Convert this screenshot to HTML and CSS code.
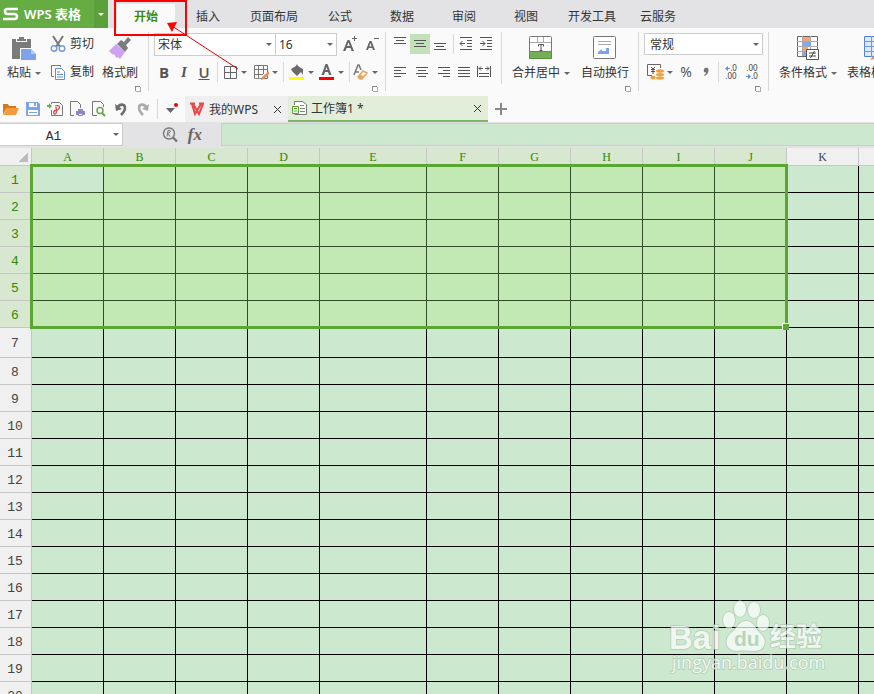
FILE: index.html
```html
<!DOCTYPE html>
<html lang="zh-CN">
<head>
<meta charset="utf-8">
<title>工作簿1 - WPS 表格</title>
<link rel="stylesheet" href="styles.css">
</head>
<body>
<div class="app">
  <header class="menubar">
    <button class="brand"><svg width="16" height="14" viewBox="0 0 16 14"><path d="M15 2H4.500Q2 2 2 4.500T4.500 7H11.500Q14 7 14 9.500T11.500 12H0" fill="none" stroke="#fff" stroke-width="2.600"/></svg><span>WPS 表格</span></button>
    <button class="brand-more" aria-label="菜单"><span class="caret"></span></button>
    <nav class="menus">
      <a class="menu active" href="#">开始</a>
      <a class="menu" href="#">插入</a>
      <a class="menu" href="#">页面布局</a>
      <a class="menu" href="#">公式</a>
      <a class="menu" href="#">数据</a>
      <a class="menu" href="#">审阅</a>
      <a class="menu" href="#">视图</a>
      <a class="menu" href="#">开发工具</a>
      <a class="menu" href="#">云服务</a>
    </nav>
  </header>

  <section class="ribbon">
    <div class="group clipboard">
      <button class="big"><svg width="24" height="24" viewBox="0 0 24 24"><path d="M0 3h4v3h11V3h4v9H8v11H0zM5 3h2V1h5v2h2v2H5z" fill="#7b7b7b"/><path d="M9 13h10l5 5v6H9z" fill="#7da3ea"/><path d="M19 13v5h5" fill="#b5cbf5"/></svg><span class="label">粘贴<i class="caret"></i></span></button>
      <button class="tool cut"><svg width="16" height="18" viewBox="0 0 16 18"><path d="M3 1l7 11M13 1L6 12" stroke="#777" stroke-width="2"/><circle cx="4" cy="13.500" r="2.800" fill="none" stroke="#7499dc" stroke-width="1.400"/><circle cx="12" cy="13.500" r="2.800" fill="none" stroke="#7499dc" stroke-width="1.400"/></svg>剪切</button>
      <button class="tool copy"><svg width="16" height="17" viewBox="0 0 16 17"><path d="M4 12.500H1.500V1.500h9V3" fill="none" stroke="#777"/><path d="M5.500 4.500h6l3 3v8h-9z" fill="#fff" stroke="#5f8ce0"/><path d="M7 8h3M7 10.500h6M7 13h6" stroke="#5f8ce0"/></svg>复制</button>
      <button class="big painter"><svg width="24" height="24" viewBox="0 0 24 24"><path d="M13 4l3 2 4-5 3 3-5 5 2 3-3 4-8-8z" fill="#7c7c7c"/><path d="M8 8l9 8-5 7-2-2-2 1-1-3-3-1-3-3z" fill="#cda3f1"/></svg><span class="label">格式刷</span></button>
      <button class="launcher" aria-label="剪贴板设置"></button>
    </div>

    <div class="group font">
      <div class="fields">
        <label class="combo"><select aria-label="字体"><option>宋体</option></select><i class="caret"></i></label>
        <label class="combo size"><select aria-label="字号"><option>16</option></select><i class="caret"></i></label>
        <button aria-label="增大字号"><svg width="16" height="18" viewBox="0 0 16 18"><path d="M1 16L5.500 5h2L12 16H9.500l-1-3h-4l-1 3zM5.200 11h2.600L6.500 7.300z" fill="#666" fill-rule="evenodd"/><path d="M10 3.500h5M12.500 1v5" stroke="#666"/></svg></button>
        <button aria-label="减小字号"><svg width="16" height="18" viewBox="0 0 16 18"><path d="M2 15L5.500 6h2L11 15H9l-.800-2h-3.500l-.700 2zM5.300 11.500h2.300L6.500 8z" fill="#666" fill-rule="evenodd"/><path d="M10 3.500h5" stroke="#666"/></svg></button>
      </div>
      <div class="tools">
        <button class="glyph bold">B</button>
        <button class="glyph italic">I</button>
        <button class="glyph under">U</button>
        <i class="sep"></i>
        <button class="drop"><svg width="15" height="15" viewBox="0 0 15 15"><path d="M1.500 1.500h12v12h-12zM7.500 1v13M1 7.500h13" fill="none" stroke="#666"/></svg><i class="caret"></i></button>
        <button class="drop"><svg width="16" height="15" viewBox="0 0 16 15"><path d="M1.500 .500h13v13h-13zM5.500 1v13M10.500 1v8M1 4.500h13M1 9.500h9" fill="none" stroke="#777"/><path d="M16 6l-7 6-1 3 3-1 5-5z" fill="#ef8b56"/><path d="M2 13.500h6" stroke="#ef8b56" stroke-dasharray="1 1"/></svg><i class="caret"></i></button>
        <i class="sep"></i>
        <button class="drop"><svg width="16" height="16" viewBox="0 0 16 16"><path d="M2 5l5-3 1-2 1 2 3 2 2 1v6l-2-3-4 4-5-5z" fill="#6a6a6a"/><path d="M0 13h15v3H0z" fill="#ff0"/></svg><i class="caret"></i></button>
        <button class="drop"><svg width="16" height="16" viewBox="0 0 16 16"><path d="M2.500 11L6.500 0h2l4 11H10L9 8H6l-1 3zM6.500 6h2L7.500 3z" fill="#666" fill-rule="evenodd"/><path d="M0 13h15v3H0z" fill="red"/></svg><i class="caret"></i></button>
        <i class="sep"></i>
        <button class="drop"><svg width="16" height="16" viewBox="0 0 16 16"><path d="M1 11L5 1h1l2 5M3 8h3" fill="none" stroke="#777" stroke-width="1.500"/><path d="M10 7l4 2-5 6H7l-2-2z" fill="#fff" stroke="#e8a55c" stroke-width="1.500"/><path d="M7 10l4 3-2 2H7l-2-2z" fill="#e8a55c"/></svg><i class="caret"></i></button>
      </div>
      <button class="launcher" aria-label="字体设置"></button>
    </div>

    <div class="group align">
      <div class="align-top">
        <button aria-label="顶端对齐"><svg width="14" height="16" viewBox="0 0 14 16"><path d="M1 1.500h12M3 4.500h8M1 7.500h12" stroke="#555"/></svg></button>
        <button class="on" aria-label="垂直居中"><svg width="14" height="16" viewBox="0 0 14 16"><path d="M1 4.500h12M3 7.500h8M1 10.500h12" stroke="#555"/></svg></button>
        <button aria-label="底端对齐"><svg width="14" height="16" viewBox="0 0 14 16"><path d="M1 7.500h12M3 10.500h8M1 13.500h12" stroke="#555"/></svg></button>
        <i class="sep"></i>
        <button aria-label="减少缩进"><svg width="14" height="16" viewBox="0 0 14 16"><path d="M1 1.500h12M8 4.500h5M8 7.500h5M8 10.500h5M1 13.500h12M1 7.500h5M3.500 5L1 7.500 3.500 10" fill="none" stroke="#555"/></svg></button>
        <button aria-label="增加缩进"><svg width="14" height="16" viewBox="0 0 14 16"><path d="M1 1.500h12M8 4.500h5M8 7.500h5M8 10.500h5M1 13.500h12M1 7.500h5M3.500 5L6 7.500 3.500 10" fill="none" stroke="#555"/></svg></button>
      </div>
      <div class="align-side">
        <button aria-label="左对齐"><svg width="14" height="14" viewBox="0 0 14 14"><path d="M1 2.500h12M1 5.500h7M1 8.500h12M1 11.500h7" stroke="#555"/></svg></button>
        <button aria-label="水平居中"><svg width="14" height="14" viewBox="0 0 14 14"><path d="M1 2.500h12M3 5.500h8M1 8.500h12M3 11.500h8" stroke="#555"/></svg></button>
        <button aria-label="右对齐"><svg width="14" height="14" viewBox="0 0 14 14"><path d="M1 2.500h12M6 5.500h7M1 8.500h12M6 11.500h7" stroke="#555"/></svg></button>
        <button aria-label="两端对齐"><svg width="14" height="14" viewBox="0 0 14 14"><path d="M1 2.500h12M1 5.500h12M1 8.500h12M1 11.500h12" stroke="#555"/></svg></button>
        <button aria-label="分散对齐"><svg width="16" height="14" viewBox="0 0 16 14"><path d="M1.500 1v11M14.500 1v11M3 3.500h4M9 3.500h4M3 8.500h10M3 11.500h10M5 1.500l-2 2 2 2M11 1.500l2 2-2 2" fill="none" stroke="#555"/></svg></button>
      </div>
      <button class="big merge"><svg width="24" height="24" viewBox="0 0 24 24"><rect x=".500" y=".500" width="22" height="22" rx="1" fill="#fff" stroke="#777"/><path d="M1 6.500h21M8.500 1v5M14.500 1v5" stroke="#aaa"/><path d="M9.500 10.500v-2h5v2M12 8.500v6M10.500 14.500h3" fill="none" stroke="#555"/><path d="M.500 15.500h22v7H.500z" fill="#76ae58" stroke="#57923b"/></svg><span class="label">合并居中<i class="caret"></i></span></button>
      <button class="big"><svg width="24" height="24" viewBox="0 0 24 24"><rect x=".500" y=".500" width="22" height="22" rx="1" fill="#fff" stroke="#777"/><path d="M5 5.500h13M5 8.500h13" stroke="#aaa"/><path d="M5 16l4-3v2h4v-3h3v6H5z" fill="#7da3ea"/></svg><span class="label">自动换行</span></button>
      <button class="launcher" aria-label="对齐设置"></button>
    </div>

    <div class="group number">
      <label class="combo"><select aria-label="数字格式"><option>常规</option></select><i class="caret"></i></label>
      <div class="tools">
        <button class="drop"><svg width="17" height="16" viewBox="0 0 17 16"><path d="M5 11.500H.500V.500h13V4" fill="none" stroke="#666"/><path d="M4 3l2 2 2-2M6 5v5M4 5.500h4M4 7.500h4" fill="none" stroke="#555"/><g fill="#efa03c"><ellipse cx="13" cy="7" rx="4" ry="1.800"/><ellipse cx="13" cy="10.500" rx="4" ry="1.500"/><ellipse cx="13" cy="14" rx="4" ry="1.700"/><ellipse cx="6" cy="13.500" rx="2.500" ry="2"/></g></svg><i class="caret"></i></button>
        <button class="percent">%</button>
        <button aria-label="千位分隔"><svg width="8" height="10" viewBox="0 0 8 10"><path d="M6.500 3.500C6.500 6 5 8 2.500 9l-.500-1c1.500-.800 2-1.500 2-2.500A2.400 2.400 0 1 1 6.500 3.500z" fill="#777"/></svg></button>
        <i class="sep"></i>
        <button class="decimal"><span><svg width="5" height="5" viewBox="0 0 5 5"><path d="M0 2.500L3 0v2h2v1H3v2z" fill="#5f8fec"/></svg>.0</span><span>.00</span></button>
        <button class="decimal"><span>.00</span><span><svg width="5" height="5" viewBox="0 0 5 5"><path d="M5 2.500L2 0v2H0v1h2v2z" fill="#5f8fec"/></svg>.0</span></button>
      </div>
      <button class="launcher" aria-label="数字设置"></button>
    </div>

    <div class="group styles">
      <button class="big"><svg width="24" height="25" viewBox="0 0 24 25"><path d="M1.500 1.500h20v20h-20z" fill="#fff" stroke="#666"/><path d="M6.500 1v20M14.500 1v20M1 6.500h21M1 11.500h21M1 16.500h21" stroke="#aaa"/><path d="M7 2h7v4H7zM7 12h5v4H7z" fill="#f6a468"/><path d="M7 7h8v4H7z" fill="#7ea9fa"/><path d="M7 17h3v4H7z" fill="#7ea9fa"/><path d="M10.500 14.500h12v10h-12z" fill="#fff" stroke="#555"/><path d="M13 18h7M13 21h7M18.500 16l-4 7" stroke="#444"/></svg><span class="label">条件格式<i class="caret"></i></span></button>
      <button class="big"><svg width="24" height="25" viewBox="0 0 24 25"><path d="M.500 1.500h22v20H.500z" fill="#dce8fb" stroke="#4f82dc"/><path d="M0 6.500h23M0 11.500h23M0 16.500h23M7.500 1v21M15.500 1v21" stroke="#6c99e4"/><path d="M6 25l5-6 8-7 3 3-7 8z" fill="#ef8b45"/></svg><span class="label">表格样式<i class="caret"></i></span></button>
    </div>
  </section>

  <section class="docbar">
    <div class="quick">
      <button aria-label="打开"><svg width="16" height="14" viewBox="0 0 16 14"><path d="M0 12V2h5l1 2h7v2H4z" fill="#d9771f"/><path d="M4 6h12l-3 7H0z" fill="#f79a3c"/></svg></button>
      <button aria-label="保存"><svg width="14" height="14" viewBox="0 0 14 14"><path d="M0 0h12l2 2v12H0z" fill="#7da3ea"/><path d="M3 1h8v4H3zM2 8h10v5H2z" fill="#fff"/><path d="M8 1h2v3H8zM3 10h8v1H3z" fill="#7da3ea"/></svg></button>
      <button aria-label="输出PDF"><svg width="16" height="16" viewBox="0 0 16 16"><path d="M4.500 3V1.500h8l3 3v10h-11V9" fill="none" stroke="#777"/><path d="M0 4h2V2l3 3-3 3V6H0z" fill="#6cab4d"/><path d="M8 5c5-2 6 3 2 4-4 0-4 4-2 4 3-1 1-6 1-7" fill="none" stroke="#d95050" stroke-width="1.300"/></svg></button>
      <button aria-label="打印"><svg width="16" height="16" viewBox="0 0 16 16"><path d="M5 14.500H1.500v-14h7l3 3V7" fill="none" stroke="#777"/><path d="M7 10h9v4H7zM9 8h5v2H9z" fill="#8d86c7"/><path d="M9.500 12.500h4v2h-4z" fill="#fff" stroke="#8d86c7"/></svg></button>
      <button aria-label="打印预览"><svg width="16" height="16" viewBox="0 0 16 16"><path d="M6 14.500H1.500v-14h8l3 3V6" fill="none" stroke="#777"/><circle cx="9" cy="9.500" r="3" fill="#fff" stroke="#69a84c" stroke-width="1.500"/><path d="M11 12l3 3" stroke="#69a84c" stroke-width="2"/></svg></button>
      <button aria-label="撤销"><svg width="14" height="14" viewBox="0 0 14 14"><path d="M3 6c3-5 8-4 8 0 0 3-2 5-4 7" fill="none" stroke="#6d6d6d" stroke-width="2.600"/><path d="M1 2l1 7 6-2z" fill="#6d6d6d"/></svg></button>
      <button aria-label="恢复"><svg width="14" height="14" viewBox="0 0 14 14"><path d="M11 6c-3-5-8-4-8 0 0 3 2 5 4 7" fill="none" stroke="#aaa" stroke-width="2.600"/><path d="M13 2l-1 7-6-2z" fill="#aaa"/></svg></button>
      <i class="sep"></i>
      <button class="custom" aria-label="自定义"><svg width="14" height="14" viewBox="0 0 14 14"><path d="M1 6h9l-4.500 5z" fill="#666"/><circle cx="11" cy="3" r="2" fill="#f00000"/></svg></button>
    </div>
    <div class="doc home"><svg width="16" height="14" viewBox="0 0 16 14"><path d="M1 1.500h5M10 1.500h5M3 2l3 10 6-10M4 2l6 10 4-10" fill="none" stroke="#ee4444" stroke-width="2"/></svg><span>我的WPS</span><button class="close" aria-label="关闭"><svg width="9" height="9" viewBox="0 0 9 9"><path d="M1 1l7 7M8 1L1 8" stroke="#333"/></svg></button></div>
    <div class="doc current"><svg width="15" height="14" viewBox="0 0 15 14"><path d="M2.500 4V.500h8l4 3v10h-12" fill="#fff" stroke="#777"/><path d="M8 4.500h4M8 7.500h5M8 10.500h5" stroke="#888"/><path d="M.500 5.500h6v7h-6zM2 7.500h3M2 10h3" fill="#fff" stroke="#53a32d"/></svg><span>工作簿1 *</span><button class="close" aria-label="关闭"><svg width="9" height="9" viewBox="0 0 9 9"><path d="M1 1l7 7M8 1L1 8" stroke="#333"/></svg></button></div>
    <button class="add" aria-label="新建"><svg width="12" height="12" viewBox="0 0 12 12"><path d="M0 6h12M6 0v12" stroke="#888" stroke-width="2"/></svg></button>
  </section>

  <section class="formula">
    <label class="name"><input aria-label="名称框" value="A1"><i class="caret"></i></label>
    <div class="fx"><svg width="16" height="16" viewBox="0 0 16 16"><circle cx="7" cy="6.500" r="5.500" fill="none" stroke="#777" stroke-width="1.400"/><path d="M11 10.500l4 4" stroke="#777" stroke-width="2.400"/><path d="M5 9.500l1-6h2q1.500 1.500-2 3l2 3" fill="none" stroke="#777"/></svg><span>fx</span></div>
    <input class="entry" aria-label="编辑栏">
  </section>

  <main class="sheet">
    <table>
      <colgroup><col class="c-head"><col><col><col><col><col class="c-wide"><col><col><col><col><col><col><col></colgroup>
      <thead><tr><th class="corner"></th></tr></thead>
      <tbody></tbody>
    </table>
    <div class="selection"></div>
    <svg class="watermark" width="160" height="76" viewBox="668 598 160 76">
      <g fill="#fff" stroke="#a9bfac" stroke-width="1.500" paint-order="stroke">
        <text class="wm-bold" x="669" y="649">Bai</text>
        <ellipse cx="729" cy="620" rx="6" ry="8"/><ellipse cx="740" cy="609" rx="6" ry="8"/><ellipse cx="754" cy="610" rx="6" ry="8"/><ellipse cx="763" cy="623" rx="6" ry="8"/>
        <path d="M746 621c8 0 9 8 14 12 9 8 4 18-5 18-6 0-12-1-18 0-11 0-14-11-6-18 6-4 7-12 15-12z"/>
        <text class="wm-cjk" x="770" y="646">经验</text>
        <text class="wm-url" x="672" y="669">jingyan.baidu.com</text>
      </g>
      <text class="wm-du" x="734" y="646">du</text>
    </svg>
  </main>
  <svg class="pointer" width="130" height="76" viewBox="112 0 130 76"><path d="M115 1h71v34h-71z" fill="none" stroke="red" stroke-width="2"/><path d="M238 69L172 26" stroke="#e00000"/><path d="M167 23l10-1-5 10z" fill="red"/></svg>
</div>
<script src="sheet.js"></script>
</body>
</html>
```
FILE: sheet.js
```js
const columns = [..."ABCDEFGHIJKL"];
const selectedColumns = 10;
const selectedRows = 6;
const head = document.querySelector("thead tr");
const body = document.querySelector("tbody");

columns.forEach((name, c) => {
  const th = document.createElement("th");
  th.scope = "col";
  th.textContent = name;
  if (c < selectedColumns) th.className = "picked";
  head.append(th);
});

for (let r = 1; r <= 20; r++) {
  const tr = document.createElement("tr");
  if (r === selectedRows + 1) tr.className = "tall";
  const th = document.createElement("th");
  th.scope = "row";
  th.textContent = r;
  if (r <= selectedRows) th.className = "picked";
  tr.append(th);
  columns.forEach((name, c) => {
    const td = document.createElement("td");
    if (r <= selectedRows && c < selectedColumns) {
      td.className = r === 1 && c === 0 ? "picked cursor" : "picked";
    }
    tr.append(td);
  });
  body.append(tr);
}
```
FILE: styles.css
```css
* { box-sizing: border-box; }
body { margin: 0; font: 12px/16px "Noto Sans", "Noto Sans CJK SC", sans-serif; color: #333; }
button, input, select { margin: 0; padding: 0; border: 0; background: none; font: inherit; color: inherit; }
button { display: flex; align-items: center; justify-content: center; white-space: nowrap; }
svg { display: block; flex: none; }
.app { position: relative; display: flex; flex-direction: column; height: 100vh; overflow: hidden; background: #fafafa; }
.caret { flex: none; border: 3px solid transparent; border-top-color: #666; border-bottom: 0; }
.sep { width: 1px; height: 20px; background: #d8d8d8; justify-self: center; }

.menubar { display: flex; height: 28px; flex: none; background: #e3e3e5; }
.brand { width: 94px; gap: 5px; padding-left: 3px; justify-content: flex-start; background: #65ad43; color: #fff; font-weight: 600; font-size: 13px; }
.brand-more { width: 14px; background: #5ca03c; }
.brand-more .caret { border-top-color: #fff; }
.menus { display: flex; align-items: flex-end; padding-left: 9px; }
.menu { min-width: 62px; height: 24px; padding: 0 11px; line-height: 26px; text-align: center; color: #333; text-decoration: none; white-space: nowrap; }
.menu.active { min-width: 58px; margin-right: 2px; background: #fafafa; color: #3c8c14; font-weight: 600; }

.ribbon { display: flex; height: 68px; flex: none; padding-top: 4px; overflow: hidden; }
.group { display: grid; flex: none; grid-template-rows: 24px 24px 3px; row-gap: 4px; height: 59px; border-right: 1px solid #d8d8d8; align-items: center; }
.launcher { grid-column: -2; grid-row: 3; width: 5px; height: 5px; align-self: end; justify-self: end; margin-right: 8px; border: solid #888; border-width: 1px 0 0 1px; box-shadow: 1px 1px #aaa; }
.big { grid-row: 1 / 3; display: grid; grid-template-rows: 28px 24px; height: 52px; justify-items: center; align-items: center; align-self: start; }
.big svg { align-self: end; }
.label { display: flex; align-items: center; gap: 4px; padding-top: 2px; }
.tool { gap: 4px; }
.clipboard { width: 149px; grid-template-columns: 48px 48px 1fr; }
.cut, .copy { grid-column: 2; }
.cut { grid-row: 1; }
.copy { grid-row: 2; }
.clipboard .painter { grid-column: 3; justify-self: start; padding-left: 6px; }

.combo { display: grid; height: 23px; align-items: center; border: 1px solid #ccc; background: #fff; }
.combo select { grid-area: 1 / 1; width: 100%; height: 21px; padding: 2px 0 0 3px; appearance: none; }
.combo .caret { grid-area: 1 / 1; justify-self: end; margin-right: 3px; pointer-events: none; }
.size { border-left: 0; }
.font { width: 237px; padding-left: 5px; grid-template-columns: 1fr; }
.fields { display: grid; grid-template-columns: 122px 61px 25px 19px; align-items: center; }
.fields button { justify-self: center; }
.font .tools { display: grid; grid-template-columns: 20px 20px 20px 6px 30px 30px 6px 30px 30px 6px 26px; align-items: center; }
.glyph { height: 20px; padding-bottom: 1px; font-size: 15px; color: #555; font-family: "Liberation Serif", serif; font-weight: bold; }
.bold { font-family: "Open Sans", sans-serif; }
.italic { font-style: italic; }
.under { font-family: "Open Sans", sans-serif; font-weight: 600; text-decoration: underline; }
.drop { gap: 3px; }

.align { width: 253px; padding-left: 4px; grid-template-columns: 111px 71px 1fr; }
.align-top { display: grid; grid-template-columns: 20px 20px 20px 6px 20px 20px; align-items: center; }
.align-top button { height: 20px; }
.align-top .on { background: #c5e1b9; }
.align-side { grid-column: 1; grid-row: 2; display: grid; grid-template-columns: 20px 24px 20px 20px 20px; }
.merge { border-left: 1px solid #d8d8d8; padding-left: 8px; }
.align .launcher { grid-column: 3; }

.number { width: 130px; padding-left: 5px; grid-template-columns: 1fr; }
.number .combo { margin-right: 5px; height: 22px; }
.number .combo select { height: 20px; padding-left: 5px; }
.number .tools { display: grid; grid-template-columns: 32px 20px 20px 4px 22px 20px; align-items: center; }
.percent { font-size: 14px; color: #555; }
.decimal { flex-direction: column; align-items: center; font-size: 8px; line-height: 8px; color: #444; }
.decimal span { display: flex; align-items: center; }
.styles { grid-template-columns: 78px 58px; padding-left: 0; border: 0; }

.docbar { display: flex; height: 26px; flex: none; }
.quick { display: grid; grid-template-columns: repeat(7, 22px) 6px 23px; width: 185px; align-items: center; }
.doc { display: flex; align-items: center; gap: 4px; padding: 0 6px 0 4px; background: #efefef; }
.doc .close { margin-left: auto; }
.home { width: 103px; }
.current { width: 200px; background: #e2eed9; border-bottom: 2px solid #7db765; }
.doc span { padding-top: 2px; }
.add { width: 26px; }

.formula { display: flex; height: 26px; flex: none; padding: 1px 0 2px; background: #e3e3e5; }
.name { display: flex; width: 123px; align-items: center; padding-right: 3px; border: 1px solid #ccc; border-left: 0; background: #fff; }
.name input { flex: 1; min-width: 0; text-align: center; font: 13px "Liberation Mono", monospace; padding: 3px 6px 0 0; }
.fx { display: flex; width: 98px; gap: 10px; align-items: center; justify-content: flex-end; padding-right: 19px; font: italic bold 17px "Liberation Serif", serif; color: #666; }
.entry { flex: 1; min-width: 0; border: 1px solid #ccc; border-right: 0; background: #cce8cf; }

.sheet { position: relative; flex: 1; min-height: 0; overflow: hidden; background: #cce8cf; }
table { width: 931px; table-layout: fixed; border-spacing: 0; }
col { width: 72px; }
.c-head { width: 32px; }
.c-wide { width: 107px; }
th, td { padding: 0; border: solid #000; border-width: 0 1px 1px 0; }
th { background: #f0f0f0; border-color: #c6c6c6; color: #444; font: 13px/16px "Liberation Mono", monospace; }
tbody th { padding-top: 3px; padding-right: 1px; }
thead th { height: 18px; padding-top: 1px; font: 12px/16px "Liberation Serif", serif; }
tbody tr { height: 27px; }
tbody .tall { height: 30px; }
th.picked { background: #d8e7d0; color: #2e8a00; }
td.picked { background: #c2e8b4; border-color: #314d28; }
td.cursor { background: #cce8cf; }
.corner { background: linear-gradient(135deg, #f0f0f0 50%, #bbb 50%) no-repeat 19px 5px / 9px 9px, #f0f0f0; }
.selection { position: absolute; left: 30px; top: 16px; width: 758px; height: 165px; border: 3px solid #5ba632; pointer-events: none; }
.selection::after { content: ""; position: absolute; right: -4px; bottom: -4px; width: 6px; height: 6px; background: #5ba632; border: solid #fff; border-width: 1px 0 0 1px; }
.watermark { position: absolute; right: 46px; bottom: 20px; opacity: 0.7; pointer-events: none; }
.wm-bold { font: bold 33px "Liberation Sans", sans-serif; }
.wm-cjk { font: bold 26px "Noto Sans CJK SC", sans-serif; }
.wm-url { font: 18px "Open Sans", sans-serif; }
.wm-du { font: bold 21px "Liberation Sans", sans-serif; fill: #b0cdb3; }
.pointer { position: absolute; left: 112px; top: 0; pointer-events: none; }
```
